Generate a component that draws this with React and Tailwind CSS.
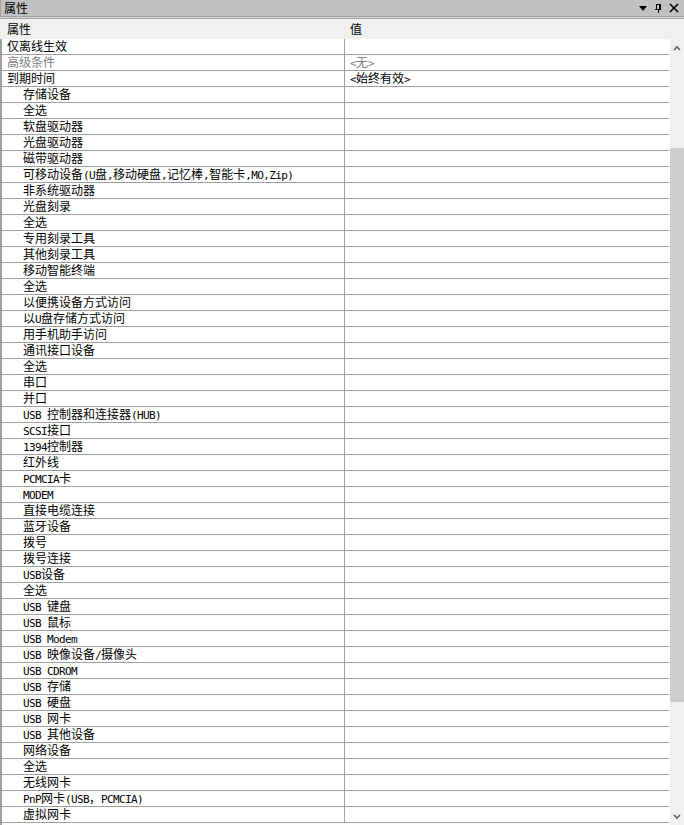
import React from "react";

const rows = [
  { label: "仅离线生效", indent: false },
  { label: "高级条件", indent: false, muted: true, value: "<无>" },
  { label: "到期时间", indent: false, value: "<始终有效>" },
  "存储设备",
  "全选",
  "软盘驱动器",
  "光盘驱动器",
  "磁带驱动器",
  "可移动设备(U盘,移动硬盘,记忆棒,智能卡,MO,Zip)",
  "非系统驱动器",
  "光盘刻录",
  "全选",
  "专用刻录工具",
  "其他刻录工具",
  "移动智能终端",
  "全选",
  "以便携设备方式访问",
  "以U盘存储方式访问",
  "用手机助手访问",
  "通讯接口设备",
  "全选",
  "串口",
  "并口",
  "USB 控制器和连接器(HUB)",
  "SCSI接口",
  "1394控制器",
  "红外线",
  "PCMCIA卡",
  "MODEM",
  "直接电缆连接",
  "蓝牙设备",
  "拨号",
  "拨号连接",
  "USB设备",
  "全选",
  "USB 键盘",
  "USB 鼠标",
  "USB Modem",
  "USB 映像设备/摄像头",
  "USB CDROM",
  "USB 存储",
  "USB 硬盘",
  "USB 网卡",
  "USB 其他设备",
  "网络设备",
  "全选",
  "无线网卡",
  "PnP网卡(USB，PCMCIA)",
  "虚拟网卡",
].map((r) => (typeof r === "string" ? { label: r, indent: true } : r));

const font = { fontFamily: '"Noto Sans CJK SC", "Liberation Sans", sans-serif' };

// Half-width runs are set in a narrow monospace so each glyph takes ~6px,
// the way the grid's system font lays out Latin characters.
function MixedText({ text }) {
  const parts = text.split(/([\x20-\x7e]+)/).filter(Boolean);
  return (
    <>
      {parts.map((p, i) =>
        /^[\x20-\x7e]+$/.test(p) ? (
          <span
            key={i}
            className="text-[11px] tracking-[-0.62px] whitespace-pre"
            style={{ fontFamily: '"DejaVu Sans Mono", monospace' }}
          >
            {p}
          </span>
        ) : (
          <span key={i}>{p}</span>
        )
      )}
    </>
  );
}

function TitleButtons() {
  return (
    <div className="flex items-center h-full gap-[5px] pr-[4px]">
      <svg width="10" height="10" viewBox="0 0 10 10">
        <path d="M1 3h8L5 8z" fill="#000" />
      </svg>
      <svg width="10" height="10" viewBox="0 0 10 10">
        <path d="M3 1h4v5H3z M2 6h6 M5 6v4 M6 1v5" stroke="#000" strokeWidth="1" fill="none" shapeRendering="crispEdges" />
      </svg>
      <svg width="12" height="10" viewBox="0 0 12 10">
        <path d="M2 1l8 8M10 1l-8 8" stroke="#000" strokeWidth="1.6" />
      </svg>
    </div>
  );
}

export default function App() {
  return (
    <div className="w-[684px] h-[825px] bg-[#f0f0f0] overflow-hidden flex flex-col text-[12px] text-black" style={font}>
      {/* panel caption */}
      <div className="h-[16px] bg-[#c2c2c2] border-l border-[#a0a0a0] flex items-center justify-between">
        <span className="pl-[3px] leading-[16px]">属性</span>
        <TitleButtons />
      </div>
      <div className="h-[1px] bg-[#a0a0a0]" />
      <div className="h-[1px] bg-[#d8d8d8]" />
      <div className="h-[1px] bg-[#a0a0a0]" />

      {/* column headers */}
      <div className="h-[20px] bg-[#f0f0f0] flex items-center">
        <div className="w-[344px] pl-[7px] leading-[20px]">属性</div>
        <div className="pl-[6px] leading-[20px]">值</div>
      </div>

      <div className="flex flex-1 min-h-0">
        {/* property grid */}
        <div className="w-[669px] bg-white border-l-2 border-[#a0a0a0] flex flex-col">
          {rows.map((r, i) => (
            <div key={i} className="h-[16px] flex border-b border-[#a0a0a0] shrink-0">
              <div
                className={
                  "w-[342px] leading-[14px] whitespace-nowrap " +
                  (r.indent ? "pl-[21px] " : "pl-[5px] ") +
                  (r.muted ? "text-[#808080]" : "")
                }
              >
                <MixedText text={r.label} />
              </div>
              <div
                className={
                  "flex-1 border-l border-[#a0a0a0] pl-[5px] leading-[14px] whitespace-nowrap " +
                  (r.muted ? "text-[#808080]" : "")
                }
              >
                {r.value ? <MixedText text={r.value} /> : null}
              </div>
            </div>
          ))}
        </div>
        <div className="w-[1px] bg-white" />
        {/* vertical scrollbar */}
        <div className="w-[14px] bg-[#f0f0f0] flex flex-col">
          <div className="h-[17px] flex items-center justify-center shrink-0">
            <svg width="8" height="6" viewBox="0 0 8 6">
              <path d="M1 5l3-3 3 3" stroke="#606060" strokeWidth="1.6" fill="none" />
            </svg>
          </div>
          <div className="h-[92px] shrink-0" />
          <div className="h-[554px] bg-[#cdcdcd] shrink-0" />
          <div className="flex-1" />
          <div className="h-[17px] flex items-center justify-center shrink-0">
            <svg width="8" height="6" viewBox="0 0 8 6">
              <path d="M1 1l3 3 3-3" stroke="#606060" strokeWidth="1.6" fill="none" />
            </svg>
          </div>
        </div>
      </div>
    </div>
  );
}
